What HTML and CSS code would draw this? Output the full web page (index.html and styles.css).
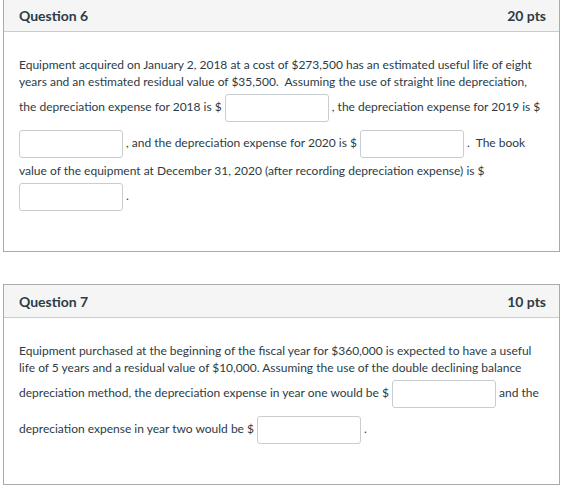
FILE: index.html
```html
<!DOCTYPE html>
<html>
<head>
<meta charset="utf-8">
<link rel="stylesheet" href="styles.css">
</head>
<body>
<div class="quiz">
  <div class="question">
    <div class="q-header">
      <span class="q-name">Question 6</span>
      <span class="q-points">20 pts</span>
    </div>
    <div class="q-body">
      <p class="q-text">Equipment acquired on January 2, 2018 at a cost of $273,500 has an estimated useful life of eight years and an estimated residual value of $35,500.&nbsp; Assuming the use of straight line depreciation, the depreciation expense for 2018 is $ <input class="blank" type="text">, the depreciation expense for 2019 is $ <input class="blank" type="text">, and the depreciation expense for 2020 is $ <input class="blank" type="text">.&nbsp; The book value of the equipment at December 31, 2020 (after recording depreciation expense) is $ <input class="blank" type="text">.</p>
    </div>
  </div>
  <div class="question">
    <div class="q-header">
      <span class="q-name">Question 7</span>
      <span class="q-points">10 pts</span>
    </div>
    <div class="q-body">
      <p class="q-text">Equipment purchased at the beginning of the fiscal year for $360,000 is expected to have a useful life of 5 years and a residual value of $10,000. Assuming the use of the double declining balance depreciation method, the depreciation expense in year one would be $ <input class="blank" type="text">and the depreciation expense in year two would be $ <input class="blank" type="text">.</p>
    </div>
  </div>
</div>
</body>
</html>
```

FILE: styles.css
```css
html, body {
  margin: 0;
  padding: 0;
  background: #ffffff;
}

body {
  font-family: Lato, "Liberation Sans", sans-serif;
  color: #2d3b45;
}

.quiz {
  padding: 0 3px;
  margin-top: -2px;
}

.question {
  border: 1px solid #aaaaaa;
  margin-bottom: 32px;
  background: #ffffff;
}

.question:last-child {
  margin-bottom: 0;
}

.q-header {
  display: flex;
  justify-content: space-between;
  align-items: center;
  height: 32px;
  padding: 0 13px 0 15px;
  background: #f5f5f5;
  border-bottom: 1px solid #c7cdd1;
  font-size: 14px;
  font-weight: 700;
}

.q-body {
  padding: 24px 16px 36px 15px;
}

.q-text {
  margin: 0;
  font-size: 12px;
  line-height: 17px;
}

.blank {
  display: inline-block;
  box-sizing: border-box;
  width: 104px;
  height: 28px;
  margin: 4px 3px 4px 0;
  padding: 0 6px;
  border: 1px solid #c7cdd1;
  border-radius: 3px;
  background: #ffffff;
  vertical-align: middle;
  font: inherit;
}
```
